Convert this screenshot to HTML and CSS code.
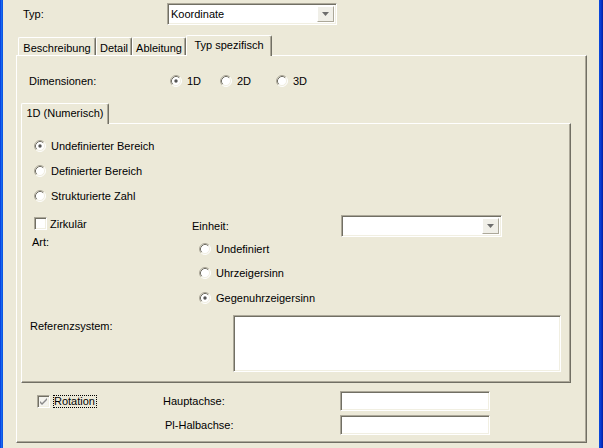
FILE: index.html
```html
<!DOCTYPE html>
<html>
<head>
<meta charset="utf-8">
<link rel="stylesheet" href="styles.css">
</head>
<body>
<svg class="defs" width="0" height="0">
  <symbol id="rb" viewBox="0 0 12 12">
    <circle cx="6" cy="6" r="5" fill="#fff"/>
    <path d="M2.11 9.89A5.5 5.5 0 0 1 9.89 2.11" stroke="#ACA899" fill="none"/>
    <path d="M9.89 2.11A5.5 5.5 0 0 1 2.11 9.89" stroke="#fff" fill="none"/>
    <path d="M2.82 9.18A4.5 4.5 0 0 1 9.18 2.82" stroke="#716F64" fill="none"/>
    <path d="M9.18 2.82A4.5 4.5 0 0 1 2.82 9.18" stroke="#F1EFE2" fill="none"/>
  </symbol>
  <symbol id="rbc" viewBox="0 0 12 12">
    <use href="#rb"/>
    <circle cx="6" cy="6" r="1.7" fill="#555"/>
  </symbol>
  <symbol id="arrow" viewBox="0 0 7 4">
    <path d="M0 0H7L3.5 4Z" fill="#6d6d6d"/>
  </symbol>
</svg>
<div class="window">
  <div class="frame-l"></div>
  <div class="client">
    <div class="row-typ">
      <span class="lbl-typ">Typ:</span>
      <div class="combo combo-typ">
        <span class="combo-text">Koordinate</span>
        <span class="drop"><svg class="arr"><use href="#arrow"/></svg></span>
      </div>
    </div>

    <div class="tabs outer-tabs">
      <div class="tab t1">Beschreibung</div>
      <div class="tab t2">Detail</div>
      <div class="tab t3">Ableitung</div>
      <div class="tab sel t4">Typ spezifisch</div>
    </div>

    <div class="panel outer">
      <div class="dim-row">
        <span class="lbl-dim">Dimensionen:</span>
        <label class="opt g1"><svg class="radio"><use href="#rbc"/></svg>1D</label>
        <label class="opt g2"><svg class="radio"><use href="#rb"/></svg>2D</label>
        <label class="opt"><svg class="radio"><use href="#rb"/></svg>3D</label>
      </div>

      <div class="tabs inner-tabs">
        <div class="tab sel t-num">1D (Numerisch)</div>
      </div>

      <div class="panel inner">
        <div class="range">
          <label class="opt row25"><svg class="radio"><use href="#rbc"/></svg>Undefinierter Bereich</label>
          <label class="opt row25"><svg class="radio"><use href="#rb"/></svg>Definierter Bereich</label>
          <label class="opt row25"><svg class="radio"><use href="#rb"/></svg>Strukturierte Zahl</label>
        </div>

        <div class="unit-area">
          <div class="unit-left">
            <label class="opt chk-row"><span class="check"></span>Zirkulär</label>
            <span class="lbl-art">Art:</span>
          </div>
          <div class="unit-right">
            <div class="einheit-row">
              <span class="lbl-einheit">Einheit:</span>
              <div class="combo combo-unit">
                <span class="combo-text"></span>
                <span class="drop"><svg class="arr"><use href="#arrow"/></svg></span>
              </div>
            </div>
            <div class="dir">
              <label class="opt row24"><svg class="radio"><use href="#rb"/></svg>Undefiniert</label>
              <label class="opt row24"><svg class="radio"><use href="#rb"/></svg>Uhrzeigersinn</label>
              <label class="opt row26"><svg class="radio"><use href="#rbc"/></svg>Gegenuhrzeigersinn</label>
            </div>
          </div>
        </div>

        <div class="ref-row">
          <span class="lbl-ref">Referenzsystem:</span>
          <div class="field ref-box"></div>
        </div>
      </div>

      <div class="rot-grid">
        <label class="opt rot">
          <span class="check checked"><svg class="tick" viewBox="0 0 9 9"><path d="M1 4l2 2 5-5v2l-5 5-2-2z" fill="#8a8a8a"/></svg></span>
          <span class="focus">Rotation</span>
        </label>
        <span class="lbl-axis">Hauptachse:</span>
        <div class="field axis-box"></div>
        <span class="empty"></span>
        <span class="lbl-axis lbl-pl">Pl-Halbachse:</span>
        <div class="field axis-box"></div>
      </div>
    </div>
  </div>
  <div class="frame-r"></div>
</div>
</body>
</html>
```

FILE: styles.css
```css
* { box-sizing: border-box; }
html, body {
  margin: 0;
  padding: 0;
  width: 603px;
  height: 448px;
  overflow: hidden;
  background: #ECE9D8;
  font-family: "Liberation Sans", Arial, sans-serif;
  font-size: 11px;
  color: #000;
}
.defs { display: block; width: 0; height: 0; overflow: hidden; }

.window {
  display: flex;
  height: 448px;
}
.frame-l {
  width: 3px;
  background: linear-gradient(to right, #0831D9, #166AEE, #0A4BDE);
}
.frame-r {
  width: 4px;
  background: linear-gradient(to right, #0A4BDE, #0838D0, #001EA0);
}
.client {
  flex: 1;
  display: flex;
  flex-direction: column;
}

/* top row */
.row-typ {
  display: flex;
  align-items: center;
  padding-top: 3px;
  height: 25px;
}
.lbl-typ {
  width: 164px;
  padding-left: 20px;
}
.combo {
  display: flex;
  align-items: center;
  background: #fff;
  border: 1px solid;
  border-color: #ACA899 #fff #fff #ACA899;
  box-shadow: inset 1px 1px #716F64, inset -1px -1px #F1EFE2;
  padding: 2px;
}
.combo-typ { width: 170px; height: 22px; }
.combo-text { flex: 1; padding-left: 1px; }
.drop {
  width: 17px;
  height: 16px;
  background: #F0EFE8;
  border: 1px solid;
  border-color: #fff #ACA899 #ACA899 #fff;
  display: flex;
  align-items: center;
  justify-content: center;
}
.arr { width: 7px; height: 4px; display: block; }

/* tabs */
.tabs {
  display: flex;
  align-items: flex-end;
}
.outer-tabs {
  margin-top: 10px;
  margin-left: 15px;
  height: 20px;
}
.tab {
  height: 18px;
  background: #ECE9D8;
  border-top: 1px solid #fff;
  border-left: 1px solid #fff;
  border-right: 1px solid #716F64;
  box-shadow: inset -1px 0 #ACA899;
  border-radius: 2px 2px 0 0;
  display: flex;
  align-items: center;
  justify-content: center;
  padding-top: 3px;
}
.tab.sel {
  height: 21px;
  margin-bottom: -1px;
  position: relative;
  z-index: 1;
  padding-top: 0;
  padding-bottom: 2px;
}
.t1 { width: 78px; }
.t2 { width: 36px; }
.t3 { width: 54px; }
.t4 { width: 86px; }

.panel {
  background: #ECE9D8;
  border-top: 1px solid #fff;
  border-left: 1px solid #fff;
  border-right: 1px solid #716F64;
  border-bottom: 1px solid #716F64;
  box-shadow: inset -1px -1px #ACA899;
}
.outer {
  margin-left: 13px;
  width: 571px;
  height: 388px;
  display: flex;
  flex-direction: column;
}

/* generic option */
.opt {
  display: flex;
  align-items: center;
  white-space: nowrap;
}
.radio {
  width: 12px;
  height: 12px;
  flex: none;
  margin-right: 5px;
}

.dim-row {
  display: flex;
  align-items: center;
  height: 14px;
  margin-top: 18px;
  padding-left: 12px;
}
.lbl-dim { width: 141px; }
.g1 { width: 50px; }
.g2 { width: 56px; }

.inner-tabs {
  margin-top: 15px;
  margin-left: 4px;
  height: 20px;
}
.t-num { width: 88px; }

.inner {
  margin-left: 4px;
  width: 550px;
  height: 260px;
  padding-left: 12px;
  display: flex;
  flex-direction: column;
}
.range {
  display: flex;
  flex-direction: column;
  margin-top: 9px;
}
.row25 { height: 25px; }
.row24 { height: 24px; }
.row26 { height: 26px; }

.unit-area {
  display: flex;
  margin-top: 7px;
}
.unit-left {
  width: 158px;
  display: flex;
  flex-direction: column;
}
.chk-row {
  margin-top: 2px;
  height: 13px;
}
.check {
  width: 13px;
  height: 13px;
  flex: none;
  margin-right: 3px;
  background: #fff;
  border: 1px solid;
  border-color: #ACA899 #fff #fff #ACA899;
  box-shadow: inset 1px 1px #716F64, inset -1px -1px #F1EFE2;
  display: flex;
  align-items: center;
  justify-content: center;
}
.check.checked { background: #F4F3EE; }
.tick { width: 9px; height: 9px; display: block; }
.lbl-art {
  margin-top: 6px;
  margin-left: -2px;
}
.unit-right {
  display: flex;
  flex-direction: column;
}
.einheit-row {
  display: flex;
  align-items: center;
  height: 22px;
}
.lbl-einheit { width: 149px; }
.combo-unit { width: 161px; height: 22px; }
.dir {
  display: flex;
  flex-direction: column;
  padding-left: 7px;
}

.ref-row {
  display: flex;
  margin-top: 4px;
  margin-left: -4px;
}
.lbl-ref {
  width: 203px;
  padding-top: 5px;
}
.field {
  background: #fff;
  border: 1px solid;
  border-color: #ACA899 #fff #fff #ACA899;
  box-shadow: inset 1px 1px #716F64, inset -1px -1px #F1EFE2;
}
.ref-box { width: 328px; height: 57px; }

.rot-grid {
  display: grid;
  grid-template-columns: 126px 177px 150px;
  grid-auto-rows: 20px;
  row-gap: 4px;
  align-items: center;
  margin-top: 8px;
  padding-left: 20px;
}
.rot { height: 14px; }
.focus {
  border: 1px dotted #000;
  padding: 0 1px 0 0;
  line-height: 11px;
}
.lbl-pl { padding-left: 2px; }
.axis-box { height: 20px; }
```
